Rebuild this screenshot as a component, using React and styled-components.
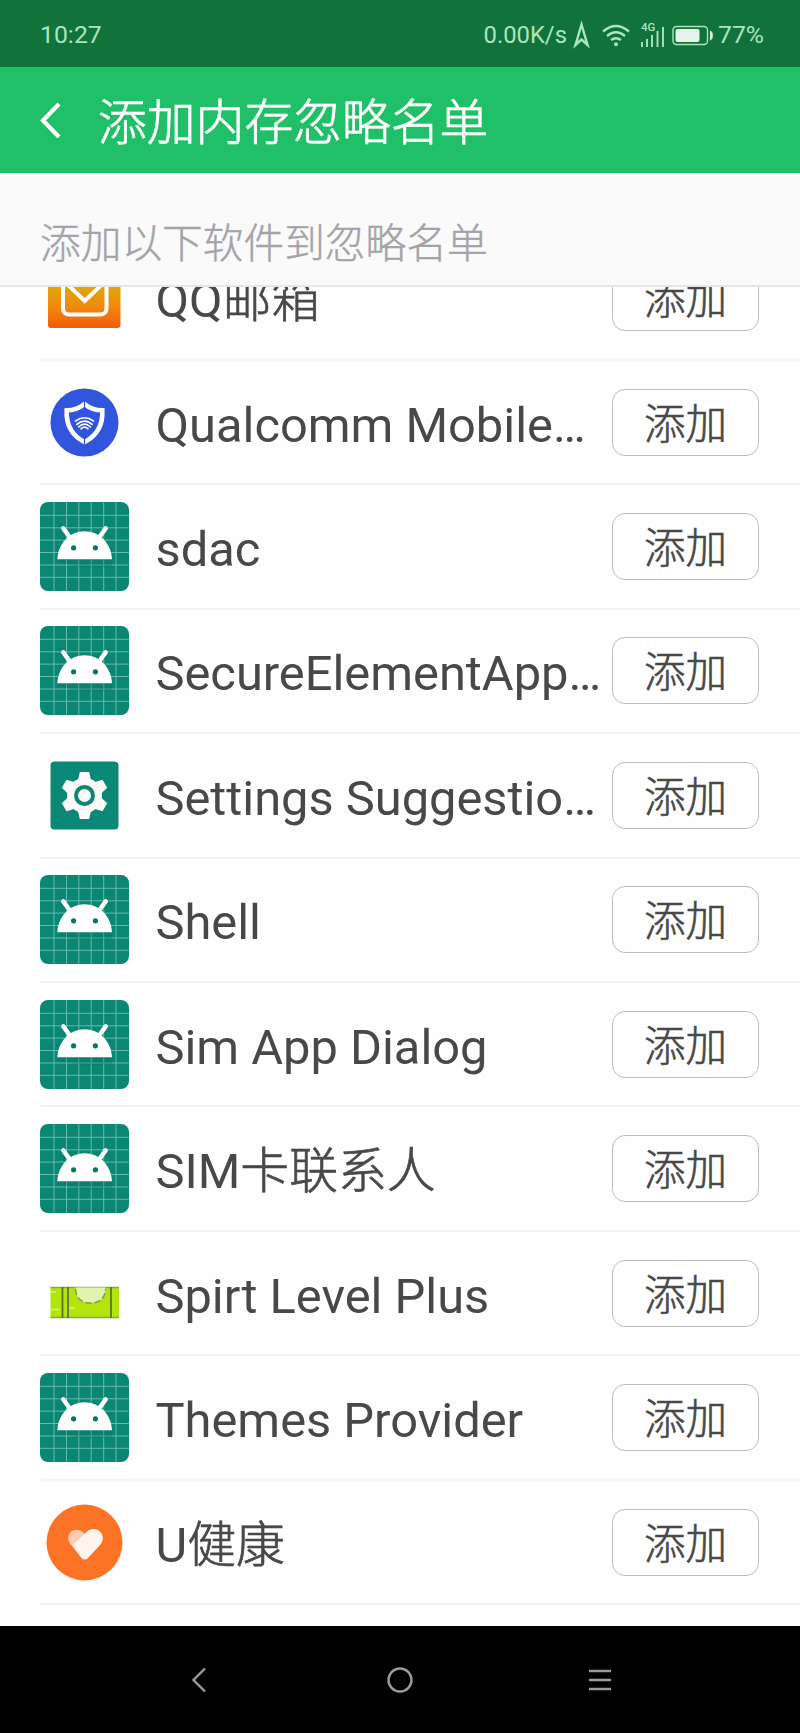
import React from "react";
import styled, { createGlobalStyle } from "styled-components";

const GlobalStyle = createGlobalStyle`
  * {
    box-sizing: border-box;
  }

  body {
    margin: 0;
    background: #fefefe;
    font-family: Roboto, "Noto Sans CJK SC", sans-serif;
  }
`;

const Screen = styled.div`
  display: flex;
  flex-direction: column;
  width: 800px;
  height: 1733px;
  overflow: hidden;
`;

const StatusBar = styled.div`
  display: flex;
  align-items: center;
  justify-content: space-between;
  flex: none;
  height: 67px;
  padding: 2px 36px 0 40px;
  background: #11733b;
  color: #a9e5bd;
  font-size: 24.8px;
  line-height: 30px;
`;

const StatusIcons = styled.div`
  display: flex;
  align-items: center;
`;

const NetSpeed = styled.span`
  font-size: 23.8px;
`;

const StatusGlyphs = styled.svg`
  display: block;
  margin: 0 3px 0 6px;
`;

const TitleBar = styled.header`
  display: flex;
  align-items: center;
  flex: none;
  height: 106px;
  padding-left: 40px;
  gap: 37px;
  background: #1fc068;
`;

const Title = styled.h1`
  margin: 0;
  padding-top: 7px;
  color: #fff;
  font-size: 48.8px;
  font-weight: 300;
  line-height: 60px;
  -webkit-text-stroke: 0.7px;
`;

const SectionHeader = styled.h2`
  flex: none;
  height: 114px;
  margin: 0;
  padding: 46px 0 0 40px;
  border-bottom: 2px solid #e6e6e6;
  background: #fafafa;
  color: #a3a3a8;
  font-size: 40.7px;
  font-weight: 300;
  line-height: 50px;
  -webkit-text-stroke: 0.4px;
`;

const AppList = styled.ul`
  flex: 1;
  min-height: 0;
  margin: 0;
  padding: 0;
  overflow: hidden;
  list-style: none;

  li:first-child {
    margin-top: -50.6px;
  }
`;

const AppRow = styled.li`
  display: flex;
  align-items: center;
  height: 124.44px;
  margin-left: 40px;
  padding-right: 41px;
  border-bottom: 2px solid #f3f3f3;
`;

const AppIcon = styled.svg`
  display: block;
  flex: none;
  width: 89px;
  height: 89px;
`;

const AppName = styled.span`
  flex: 1;
  padding: 7px 0 0 26.5px;
  color: #484848;
  font-size: 48.8px;
  line-height: 60px;
  white-space: nowrap;
`;

const Cjk = styled.span`
  font-weight: 300;
  -webkit-text-stroke: 0.7px;
`;

const AddButton = styled.button`
  flex: none;
  width: 147px;
  height: 67px;
  padding: 5px 0 0;
  border: 1.5px solid #bdbdbd;
  border-radius: 13px;
  background: #fefefe;
  color: #484848;
  font-family: inherit;
  font-size: 41.5px;
  font-weight: 300;
  line-height: 50px;
  -webkit-text-stroke: 0.6px;
`;

const NavBar = styled.nav`
  display: grid;
  grid-template-columns: repeat(3, 200px);
  justify-content: center;
  justify-items: center;
  align-items: center;
  flex: none;
  height: 107px;
  background: #000;
`;

const NavIcon = styled.svg`
  display: block;
  fill: none;
  stroke: #9b9b9b;
  stroke-width: 2.4;
`;

const gridLines = [14, 26.5, 38.8, 51.2, 63.7, 76];

const AndroidIcon = () => (
  <AppIcon viewBox="0 0 89 89">
    <rect width="89" height="89" rx="8" fill="#0a8773" />
    {gridLines.map((p) => (
      <path
        key={p}
        d={`M${p} 0V89M0 ${p - 0.7}H89`}
        stroke="#6fc0b2"
        strokeWidth="0.9"
      />
    ))}
    <path d="M18 57H72V64Q45 68 18 60Z" fill="#056b5b" opacity=".25" />
    <path
      d="M17.3 57.3C18.3 41 30 29.3 44.6 29.3S71 41 72 57.3Z"
      fill="#fff"
    />
    <path
      d="M23.3 26.4L29.2 34.5M65.7 26.4L59.8 34.5"
      stroke="#fff"
      strokeWidth="4.4"
      strokeLinecap="round"
    />
    <circle cx="33.6" cy="45.8" r="2.6" fill="#0a7565" />
    <circle cx="55.4" cy="45.8" r="2.6" fill="#0a7565" />
  </AppIcon>
);

const MailIcon = () => (
  <AppIcon viewBox="0 0 89 89">
    <defs>
      <linearGradient id="mail" x1="0" y1="0" x2="0" y2="1">
        <stop offset="0" stopColor="#f7c500" />
        <stop offset=".42" stopColor="#dfa60f" />
        <stop offset=".7" stopColor="#f28a0c" />
        <stop offset="1" stopColor="#f25a0a" />
      </linearGradient>
    </defs>
    <rect x="8" y="3" width="72.5" height="72" rx="3" fill="url(#mail)" />
    <rect
      x="23"
      y="21"
      width="43.5"
      height="40.5"
      rx="6"
      fill="none"
      stroke="#fff"
      strokeWidth="4"
    />
    <path d="M24 28L44.7 48L65.5 28" fill="none" stroke="#fff" strokeWidth="4" />
  </AppIcon>
);

const ShieldIcon = () => (
  <AppIcon viewBox="0 0 89 89">
    <circle cx="44.5" cy="44.5" r="34" fill="#3155dc" />
    <path
      d="M44.5 26Q37 32.3 26.7 32.3Q25.5 54 44.5 64Q63.5 54 62.3 32.3Q52 32.3 44.5 26Z"
      fill="none"
      stroke="#fff"
      strokeWidth="4.6"
    />
    <path d="M44.5 20V31M44.5 58V68" stroke="#3155dc" strokeWidth="1.2" />
    <g fill="none" stroke="#fff" strokeWidth="1.6" strokeLinecap="round">
      <path d="M35.5 43Q44.5 36.5 53.5 43" />
      <path d="M36.8 46.3Q44.5 40 52.2 46.3" />
      <path d="M38.7 48.8Q44.5 43.6 50.3 48.8" />
      <path d="M41 50.8Q44.5 47.6 48 50.8" />
    </g>
  </AppIcon>
);

const GearIcon = () => (
  <AppIcon viewBox="0 0 89 89">
    <rect x="10.5" y="10.5" width="68" height="68" rx="4" fill="#0b8775" />
    <g fill="#fafafa" transform="translate(44.5 44.5)">
      <circle r="17.5" />
      {[0, 60, 120, 180, 240, 300].map((angle) => (
        <path
          key={angle}
          d="M-6.8 -14L-4.7 -23.5H4.7L6.8 -14Z"
          transform={`rotate(${angle})`}
        />
      ))}
    </g>
    <circle
      cx="44.5"
      cy="44.5"
      r="8.5"
      fill="#fafafa"
      stroke="#0b8775"
      strokeWidth="4"
    />
  </AppIcon>
);

const LevelIcon = () => (
  <AppIcon viewBox="0 0 89 89">
    <rect x="10.5" y="38" width="68.5" height="31" fill="#b1e50b" />
    <path d="M10.5 38.5H79M10.5 68.5H79" stroke="#8aa83d" strokeWidth="1.3" />
    <path d="M11 43H16M11 60.5H20M28 59H35" stroke="#d9f56c" strokeWidth="1.5" />
    <path
      d="M22.5 38V69M28 38V69M71 38V69"
      stroke="#55702a"
      strokeWidth="1.7"
    />
    <path d="M35.5 38.5C35.5 49 41 54 50.5 54S65.5 49 65.5 38.5Z" fill="#e2f3ad" />
    <path
      d="M35.5 40C36 49 41 54 50.5 54S65 49 65.5 40"
      fill="none"
      stroke="#819b4c"
      strokeWidth="1.5"
      strokeDasharray="6 3"
    />
  </AppIcon>
);

const HeartIcon = () => (
  <AppIcon viewBox="0 0 89 89">
    <circle cx="44.5" cy="44.5" r="38" fill="#fd7326" />
    <path
      d="M30.5 46.5C25.5 40.5 29 31.8 36.5 31.8C40 31.8 42.5 33.5 44.5 35.5L52 43L44 58Z"
      fill="#ffccb0"
    />
    <path
      d="M32 47.5L46.5 34C50 30.3 56 29.8 60 33.5C64 37.5 63.5 43 60.5 46.5L48 60C46 62 43.5 62 41.5 60Z"
      fill="#fff3ee"
    />
  </AppIcon>
);

const icons = {
  android: AndroidIcon,
  mail: MailIcon,
  shield: ShieldIcon,
  gear: GearIcon,
  level: LevelIcon,
  heart: HeartIcon,
};

const apps = [
  { name: "QQ", cjk: "邮箱", icon: "mail" },
  { name: "Qualcomm Mobile…", icon: "shield" },
  { name: "sdac", icon: "android" },
  { name: "SecureElementApp…", icon: "android" },
  { name: "Settings Suggestio…", icon: "gear" },
  { name: "Shell", icon: "android" },
  { name: "Sim App Dialog", icon: "android" },
  { name: "SIM", cjk: "卡联系人", icon: "android" },
  { name: "Spirt Level Plus", icon: "level" },
  { name: "Themes Provider", icon: "android" },
  { name: "U", cjk: "健康", icon: "heart" },
];

const NetworkIcons = () => (
  <StatusGlyphs width="142" height="30" viewBox="0 0 142 30" fill="none">
    <path
      d="M8.5 4.5L2.5 25L8.5 19.5L14.5 25Z"
      stroke="#a9e5bd"
      strokeWidth="2.4"
    />
    <g stroke="#a9e5bd" strokeWidth="2.4">
      <path d="M30 11.5Q43 0.5 56 11.5" />
      <path d="M34 16Q43 8.5 52 16" />
      <path d="M38 20Q43 16.5 48 20" />
    </g>
    <circle cx="43" cy="24.2" r="2" fill="#a9e5bd" />
    <text
      x="68"
      y="10.5"
      fill="#a9e5bd"
      fontSize="11.5"
      fontWeight="500"
      fontFamily="Roboto, sans-serif"
    >
      4G
    </text>
    <path
      d="M69 27V22M74 27V19M79 27V15M84.5 27V11M90 27V7"
      stroke="#a9e5bd"
      strokeWidth="1.9"
    />
    <rect
      x="100"
      y="6.5"
      width="34.5"
      height="18"
      rx="3.5"
      stroke="#a9e5bd"
      strokeWidth="1.4"
    />
    <rect x="102.5" y="9" width="24" height="13" rx="2" fill="#e6f3ea" />
    <path d="M137.5 11C140 12 140 19 137.5 20Z" fill="#d5f0de" stroke="#d5f0de" />
  </StatusGlyphs>
);

export default function App() {
  return (
    <>
      <GlobalStyle />
      <Screen>
        <StatusBar>
          <span>10:27</span>
          <StatusIcons>
            <NetSpeed>0.00K/s</NetSpeed>
            <NetworkIcons />
            <span>77%</span>
          </StatusIcons>
        </StatusBar>

        <TitleBar>
          <svg width="21" height="36" viewBox="0 0 21 36" fill="none">
            <path d="M19 2L3 18.5L19 35" stroke="#fff" strokeWidth="4.2" />
          </svg>
          <Title>添加内存忽略名单</Title>
        </TitleBar>

        <SectionHeader>添加以下软件到忽略名单</SectionHeader>

        <AppList>
          {apps.map(({ name, cjk, icon }) => {
            const Icon = icons[icon];
            return (
              <AppRow key={name}>
                <Icon />
                <AppName>
                  {name}
                  {cjk && <Cjk>{cjk}</Cjk>}
                </AppName>
                <AddButton>添加</AddButton>
              </AppRow>
            );
          })}
        </AppList>

        <NavBar>
          <NavIcon width="26" height="26" viewBox="0 0 26 26">
            <path d="M18 1.5L6.5 13L18 24.5" />
          </NavIcon>
          <NavIcon width="26" height="26" viewBox="0 0 26 26">
            <circle cx="13" cy="13" r="11.5" />
          </NavIcon>
          <NavIcon width="26" height="26" viewBox="0 0 26 26">
            <path d="M2 4H24M2 13H24M2 22H24" />
          </NavIcon>
        </NavBar>
      </Screen>
    </>
  );
}
